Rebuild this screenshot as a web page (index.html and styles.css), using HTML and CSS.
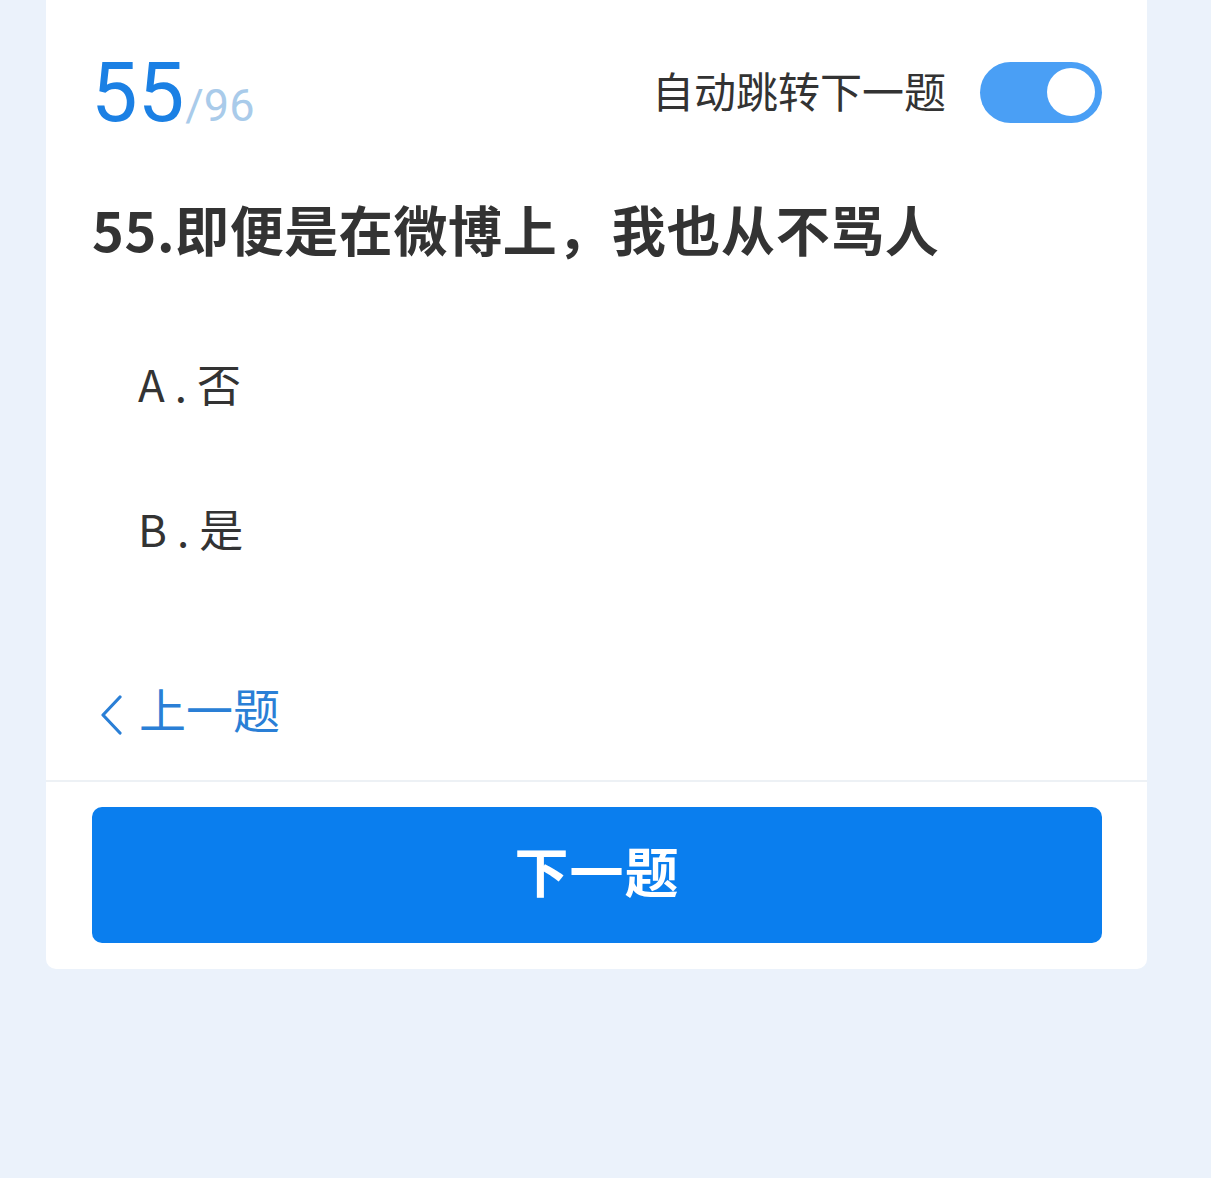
FILE: index.html
```html
<!DOCTYPE html>
<html lang="zh-CN">
<head>
<meta charset="utf-8">
<title>答题</title>
<link rel="stylesheet" href="styles.css">
</head>
<body>
<div class="card">
  <div class="main">
    <div class="header">
      <div class="progress"><span class="cur">55</span><span class="total">/96</span></div>
      <div class="auto">
        <span class="auto-label">自动跳转下一题</span>
        <div class="toggle"><div class="knob"></div></div>
      </div>
    </div>
    <div class="question">55.即便是在微博上，我也从不骂人</div>
    <div class="options">
      <div class="option">A.否</div>
      <div class="option">B.是</div>
    </div>
    <div class="prev">
      <svg class="chev" width="22" height="40" viewBox="0 0 22 40"><polyline points="19,2 2,20 19,38" fill="none" stroke="#2a7fd6" stroke-width="3.2" stroke-linecap="round" stroke-linejoin="round"/></svg>
      <span class="prev-text">上一题</span>
    </div>
  </div>
  <div class="footer">
    <button class="next">下一题</button>
  </div>
</div>
</body>
</html>
```
FILE: styles.css
```css
html, body {
  margin: 0;
  padding: 0;
  background: #ebf2fb;
  font-family: "Noto Sans CJK SC", "Noto Sans", sans-serif;
  color: #333;
}
.card {
  margin-left: 46px;
  width: 1101px;
  background: #fff;
  border-radius: 0 0 10px 10px;
}
.main {
  padding: 0 45px 0 46px;
}
.header {
  height: 184px;
  display: flex;
  justify-content: space-between;
  align-items: center;
}
.progress {
  font-family: Roboto, "Liberation Sans", sans-serif;
  line-height: 1;
  display: flex;
  align-items: baseline;
}
.cur {
  font-size: 83px;
  color: #1b80e4;
  margin-left: -1px;
}
.total {
  font-size: 45px;
  color: #a9cbea;
  margin-left: 1px;
}
.auto {
  display: flex;
  align-items: center;
  gap: 34px;
}
.auto-label {
  font-size: 42px;
  line-height: 1;
  color: #333;
  padding-bottom: 4px;
}
.toggle {
  width: 122px;
  height: 61px;
  border-radius: 31px;
  background: #4a9ff5;
  display: flex;
  justify-content: flex-end;
  align-items: center;
  padding-right: 7px;
  box-sizing: border-box;
}
.knob {
  width: 48px;
  height: 48px;
  border-radius: 50%;
  background: #fff;
}
.question {
  margin-top: 13px;
  font-size: 54px;
  line-height: 64px;
  font-weight: 700;
  color: #333;
  letter-spacing: 0.6px;
}
.options {
  margin-top: 53px;
  padding-left: 46px;
}
.option {
  height: 145px;
  display: flex;
  align-items: center;
  font-size: 44px;
  letter-spacing: 10px;
  color: #333;
  padding-bottom: 8px;
  box-sizing: border-box;
}
.prev {
  margin-top: 76px;
  height: 64px;
  display: flex;
  align-items: center;
  gap: 16px;
  padding-left: 9px;
}
.chev {
  display: block;
  margin-top: 6px;
}
.prev-text {
  font-size: 47px;
  line-height: 1;
  color: #2a7fd6;
  padding-bottom: 10px;
}
.footer {
  margin-top: 36px;
  border-top: 2px solid #edf1f5;
  padding: 25px 45px 26px 46px;
}
.next {
  display: block;
  width: 100%;
  height: 136px;
  border: none;
  border-radius: 10px;
  background: #0a7eee;
  color: #fff;
  font-family: "Noto Sans CJK SC", "Noto Sans", sans-serif;
  font-size: 54px;
  font-weight: 700;
  letter-spacing: 1px;
  padding: 0 0 12px 0;
}
```
